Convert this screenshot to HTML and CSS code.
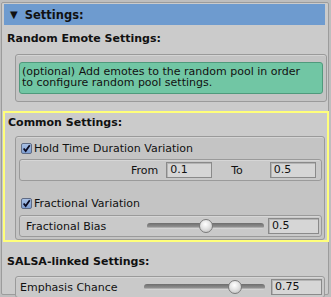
FILE: index.html
```html
<!DOCTYPE html>
<html>
<head>
<meta charset="utf-8">
<link rel="stylesheet" href="styles.css">
</head>
<body>
<div class="panel">
  <div class="header"><span class="tri">▼</span><span>Settings:</span></div>
  <div class="label bold l1">Random Emote Settings:</div>
  <div class="box box1">
    <div class="help">(optional) Add emotes to the random pool in order to configure random pool settings.</div>
  </div>
  <div class="yellow">
    <div class="label bold l2">Common Settings:</div>
    <div class="box box2">
      <div class="check"><span class="cb"><svg width="11" height="11" viewBox="0 0 11 11"><path d="M2 5.5 L4.5 8.5 L9.5 1.5" fill="none" stroke="#0a0a20" stroke-width="2.2"/></svg></span><span>Hold Time Duration Variation</span></div>
      <div class="row fromto">
        <span class="flab">From</span>
        <span class="field f1">0.1</span>
        <span class="flab tolab">To</span>
        <span class="field f2">0.5</span>
      </div>
      <div class="check c2"><span class="cb"><svg width="11" height="11" viewBox="0 0 11 11"><path d="M2 5.5 L4.5 8.5 L9.5 1.5" fill="none" stroke="#0a0a20" stroke-width="2.2"/></svg></span><span>Fractional Variation</span></div>
      <div class="row slrow">
        <span class="rlab">Fractional Bias</span>
        <div class="slider s1"><div class="track"></div><div class="knob" style="left:50%"></div></div>
        <span class="field f3">0.5</span>
      </div>
    </div>
  </div>
  <div class="label bold l3">SALSA-linked Settings:</div>
  <div class="row slrow emph">
    <span class="rlab">Emphasis Chance</span>
    <div class="slider s2"><div class="track"></div><div class="knob" style="left:75%"></div></div>
    <span class="field f4">0.75</span>
  </div>
</div>
</body>
</html>
```
FILE: styles.css
```css
* { box-sizing: border-box; }
body {
  margin: 0;
  background: #bebebe;
  font-family: "DejaVu Sans", Verdana, sans-serif;
  font-size: 11px;
  color: #111;
  width: 331px;
  height: 297px;
  overflow: hidden;
}
.panel {
  margin: 2px 2px 0 1px;
  width: 328px;
  height: 293px;
  border: 1px solid #9c9c9c;
  border-radius: 2px;
  background: #cbcbcb;
  padding: 1px 0 0 0;
}
.header {
  margin: 0 0 0 2px;
  width: 321px;
  height: 21px;
  background: #6e9bcf;
  display: flex;
  align-items: center;
  font-weight: bold;
  font-size: 11.5px;
  padding-left: 6px;
}
.tri { font-size: 10px; margin-right: 7px; }
.label {
  height: 14px;
  line-height: 14px;
}
.bold { font-weight: bold; }
.l1 { margin: 7px 0 0 5px; }
.box {
  border: 1px solid #9a9a9a;
  border-radius: 3px;
  background: #c4c4c4;
  box-shadow: inset 0 1px 0 #d4d4d4;
}
.box1 {
  margin: 8px 0 0 13px;
  width: 312px;
  height: 48px;
  padding: 7px 3px 0 3px;
}
.help {
  background: #71c6a4;
  border: 1px solid #4f9a7c;
  border-radius: 3px;
  height: 32px;
  padding: 3px 8px 0 2px;
  line-height: 11px;
  font-size: 11px;
}
.yellow {
  margin: 9px 0 0 1px;
  width: 326px;
  height: 131px;
  border: 2px solid #ffff7a;
  padding: 1px 0 0 0;
}
.l2 { margin: 2px 0 0 3px; }
.box2 {
  margin: 6px 0 0 10px;
  width: 310px;
  height: 104px;
  padding: 5px 2px 0 3px;
}
.check {
  display: flex;
  align-items: center;
  height: 12px;
  gap: 2px;
  margin-left: 2px;
}
.cb {
  width: 11px;
  height: 11px;
  border: 1px solid #5f6b84;
  border-radius: 2px;
  background: linear-gradient(#a8c0e4, #7e9ed2);
  display: flex;
  align-items: center;
  justify-content: center;
}
.cb svg { display: block; }
.row {
  display: flex;
  align-items: center;
  border: 1px solid #9a9a9a;
  border-radius: 3px;
  background: #c9c9c9;
  box-shadow: inset 0 1px 0 #d6d6d6;
  height: 22px;
}
.fromto {
  margin-top: 5px;
  width: 303px;
}
.flab { margin-left: auto; }
.fromto .flab:first-child { margin-left: 111px; }
.field {
  height: 16px;
  border: 1px solid #8a8a8a;
  background: #d6d6d6;
  box-shadow: inset 1px 1px 0 #b4b4b4;
  line-height: 14px;
  padding-left: 3px;
}
.f1 { width: 46px; margin-left: 8px; }
.tolab { margin-left: 19px; }
.f2 { width: 46px; margin-left: 27px; margin-right: 2px; }
.c2 { margin-top: 16px; }
.slrow { margin-top: 6px; width: 303px; }
.rlab { margin-left: 6px; width: 120px; }
.slider {
  position: relative;
  height: 14px;
  flex: 1;
}
.track {
  position: absolute;
  left: 0; right: 0; top: 4px;
  height: 6px;
  border-radius: 3px;
  background: linear-gradient(#6d6d6d, #8d8d8d 60%, #e6e6e6);
}
.knob {
  position: absolute;
  top: 0;
  width: 14px;
  height: 14px;
  margin-left: -7px;
  border-radius: 50%;
  border: 1px solid #7a7a7a;
  background: radial-gradient(circle at 45% 35%, #ffffff, #e0e0e0 50%, #b8b8b8);
}
.s1 { margin-left: 1px; margin-right: 4px; }
.f3 { width: 51px; margin-right: 2px; }
.l3 { margin: 13px 0 0 5px; }
.emph {
  margin: 7px 0 0 13px;
  width: 310px;
}
.emph .rlab { margin-left: 4px; width: 124px; }
.s2 { margin-left: 0; margin-right: 6px; }
.f4 { width: 51px; margin-right: 2px; }
```
